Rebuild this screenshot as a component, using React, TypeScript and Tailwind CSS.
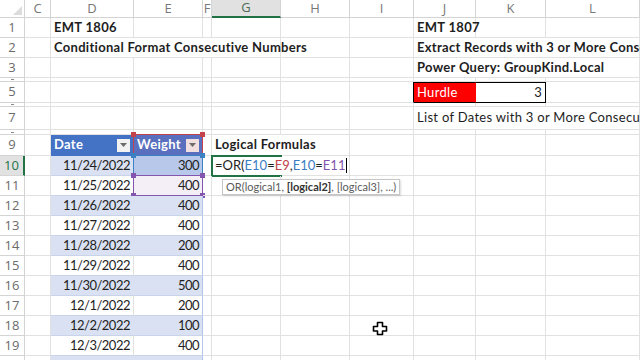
import React from 'react';

type CellSpec = {
  text?: React.ReactNode;
  span?: number;
  cls?: string;
  over?: React.ReactNode;
};

type RowSpec = {
  n: number;
  hidden?: boolean;
  active?: boolean;
  cells: Record<string, CellSpec>;
};

const COLS = ['C', 'D', 'E', 'F', 'G', 'H', 'I', 'J', 'K', 'L'];
const spanCls: Record<number, string> = { 1: '', 2: 'col-span-2', 3: 'col-span-3', 4: 'col-span-4' };

const dates = ['11/24/2022', '11/25/2022', '11/26/2022', '11/27/2022', '11/28/2022', '11/29/2022', '11/30/2022', '12/1/2022', '12/2/2022', '12/3/2022'];
const weights = [300, 400, 400, 400, 200, 400, 500, 200, 100, 400];

const FilterBtn = ({ tint }: { tint?: boolean }) => (
  <span
    className={`flex h-[13px] w-[13px] shrink-0 items-center justify-center ${tint ? 'bg-[#f1dede]' : 'bg-[#f2f2f2]'}`}
  >
    <svg width="7" height="4" viewBox="0 0 7 4">
      <path d="M0 0h7L3.5 4z" fill="#6b6b6b" />
    </svg>
  </span>
);

// colored outline that Excel draws round a cell named in the formula
const RefBox = ({ color }: { color: string }) => (
  <div className="pointer-events-none absolute inset-[-1px]">
    <div className="absolute inset-0 border-[1.5px]" style={{ borderColor: color }} />
    <div className="absolute left-[-2px] top-[-2px] h-[5px] w-[5px]" style={{ background: color }} />
    <div className="absolute right-[-2px] top-[-2px] h-[5px] w-[5px]" style={{ background: color }} />
    <div className="absolute bottom-[-2px] left-[-2px] h-[5px] w-[5px]" style={{ background: color }} />
    <div className="absolute bottom-[-2px] right-[-2px] h-[5px] w-[5px]" style={{ background: color }} />
  </div>
);

const num = 'justify-end tracking-[-0.5px]';

const buildRows = (): RowSpec[] => {
  const rows: RowSpec[] = [
    { n: 1, cells: { D: { text: 'EMT 1806', cls: 'font-bold' }, J: { text: 'EMT 1807', cls: 'font-bold' } } },
    {
      n: 2,
      cells: {
        D: { text: 'Conditional Format Consecutive Numbers', span: 4, cls: 'font-bold' },
        J: { text: 'Extract Records with 3 or More Consecutive', span: 3, cls: 'font-bold' },
      },
    },
    { n: 3, cells: { J: { text: 'Power Query: GroupKind.Local', span: 3, cls: 'font-bold' } } },
    { n: 4, hidden: true, cells: {} },
    {
      n: 5,
      cells: {
        I: { cls: 'border-r-black' },
        J: { text: 'Hurdle', cls: 'bg-[#ff0000] text-white border-t border-t-black border-b-black border-r-[#ff0000]' },
        K: { text: '3', cls: 'justify-end border-t border-t-black border-b-black border-r-black' },
      },
    },
    { n: 6, hidden: true, cells: {} },
    { n: 7, cells: { J: { text: 'List of Dates with 3 or More Consecutive Numbers', span: 3 } } },
    { n: 8, hidden: true, cells: {} },
    {
      n: 9,
      cells: {
        D: {
          text: (
            <>
              <span>Date</span>
              <FilterBtn />
            </>
          ),
          cls: 'bg-[#4472c4] text-white font-bold justify-between pr-[3px] border-r-[#4472c4] border-b-[#4472c4]',
        },
        E: {
          text: (
            <>
              <span>Weight</span>
              <FilterBtn tint />
            </>
          ),
          cls: 'bg-[#5a70be] text-white font-bold justify-between pr-[3px] border-r-[#b4c6e7] border-b-[#5a70be]',
          over: <RefBox color="#c2434b" />,
        },
        G: { text: 'Logical Formulas', span: 2, cls: 'font-bold' },
      },
    },
  ];

  dates.forEach((d, i) => {
    const n = 10 + i;
    const band = i % 2 === 0;
    const cells: Record<string, CellSpec> = {
      D: {
        text: d,
        cls: `${num} ${band ? 'bg-[#d9e1f2] border-r-[#d9e1f2]' : 'bg-white border-r-[#e1e1e1]'} border-b-[#c9d4ea]`,
      },
      E: {
        text: String(weights[i]),
        cls: `${num} ${band ? 'bg-[#d9e1f2]' : 'bg-white'} border-r-[#b4c6e7] border-b-[#c9d4ea]`,
      },
    };
    if (n === 10) {
      cells.E = { ...cells.E, cls: `${num} bg-[#b7c8ea] border-r-[#b4c6e7] border-b-[#c9d4ea]`, over: <RefBox color="#3b82c4" /> };
      cells.G = {
        span: 2,
        cls: 'bg-white tracking-normal',
        text: (
          <span className="relative z-10 whitespace-nowrap">
            =OR(<span className="text-[#3b7dc4]">E10</span>=<span className="text-[#c2434b]">E9</span>,
            <span className="text-[#3b7dc4]">E10</span>=<span className="text-[#8455ae]">E11</span>
            <span className="ml-px inline-block h-[15px] w-px translate-y-[3px] bg-black" />
          </span>
        ),
        over: (
          <div className="pointer-events-none absolute left-[-1px] top-[-1px] h-[22px] w-[71px] border-y-2 border-l-2 border-[#217346]" />
        ),
      };
    }
    if (n === 11) {
      cells.E = { ...cells.E, cls: `${num} bg-[#f4eef7] border-r-[#b4c6e7] border-b-[#c9d4ea]`, over: <RefBox color="#8455ae" /> };
      cells.G = {
        over: (
          <div className="absolute left-[10px] top-[3px] z-10 whitespace-nowrap border border-[#c6c6c6] bg-white px-[3px] text-[11px] leading-[14px] tracking-normal text-[#5a5a5a] shadow-[1px_1px_2px_rgba(0,0,0,0.15)]">
            OR(logical1, <span className="font-bold text-[#333]">[logical2]</span>, [logical3], ...)
          </div>
        ),
      };
    }
    if (n === 18) {
      cells.I = {
        over: (
          <svg className="absolute left-[22px] top-[5px]" width="16" height="15" viewBox="0 0 16 15">
            <path
              d="M5.5 1.5h5v4h4v4.5h-4v3.5h-5v-3.5h-4v-4.5h4z"
              fill="white"
              stroke="black"
              strokeWidth="1.6"
              strokeLinejoin="round"
            />
          </svg>
        ),
      };
    }
    rows.push({ n, active: n === 10, cells });
  });

  rows.push({
    n: 20,
    cells: {
      D: { cls: 'bg-[#d9e1f2] border-r-[#d9e1f2]' },
      E: { cls: 'bg-[#d9e1f2] border-r-[#b4c6e7]' },
    },
  });
  return rows;
};

const App: React.FC = () => {
  const rows = buildRows();

  return (
    <div className="h-[360px] w-[640px] overflow-hidden bg-white text-[13px] tracking-[0.3px] text-[#1e1e1e] [font-family:Lato,'Open_Sans',sans-serif]">
      <div className="grid grid-cols-[25px_26px_83px_69px_9px_69px_69px_64px_62px_70px_94px] grid-rows-[18px_20px_20px_20px_4px_21px_4px_23px_5px_21px_repeat(11,20px)]">
        {/* column headings */}
        <div className="relative border-b border-r border-[#d4d4d4]">
          <svg className="absolute bottom-[2px] right-[2px]" width="9" height="9" viewBox="0 0 9 9">
            <path d="M9 0v9H0z" fill="#dcdcdc" />
          </svg>
        </div>
        {COLS.map((c) => (
          <div
            key={c}
            className={`flex items-center justify-center overflow-hidden border-r border-[#d4d4d4] text-[13px] tracking-normal [font-family:'Open_Sans',sans-serif] ${
              c === 'G' ? 'border-b-2 border-b-[#217346] bg-[#e1e1e1] text-[#4f6a58]' : 'border-b text-[#777]'
            }`}
          >
            {c}
          </div>
        ))}

        {rows.map((r) => {
          const out: React.ReactNode[] = [];
          out.push(
            <div
              key={`h${r.n}`}
              className={`flex items-center justify-center overflow-hidden border-b text-[13px] tracking-normal [font-family:'Open_Sans',sans-serif] ${
                r.active
                  ? 'border-r-2 border-[#d4d4d4] border-r-[#217346] bg-[#e1e1e1] text-[#217346]'
                  : 'border-r border-[#d4d4d4] text-[#6b6b6b]'
              }`}
            >
              {r.hidden ? <span className="h-px w-[3px] bg-[#888]" /> : r.n}
            </div>,
          );
          let skip = 0;
          COLS.forEach((c) => {
            if (skip > 0) {
              skip--;
              return;
            }
            const s = r.cells[c] || {};
            const span = s.span || 1;
            skip = span - 1;
            out.push(
              <div
                key={`${r.n}${c}`}
                className={`relative flex items-center whitespace-nowrap border-b border-r border-[#e1e1e1] px-[3px] ${spanCls[span]} ${
                  s.cls || ''
                }`}
              >
                {!r.hidden && s.text}
                {s.over}
              </div>,
            );
          });
          return out;
        })}
      </div>
    </div>
  );
};

export default App;
